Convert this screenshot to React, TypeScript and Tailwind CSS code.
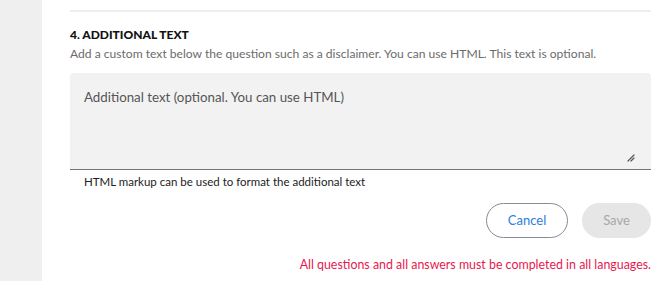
import React from 'react';

const App = () => {
  return (
    <div className="flex h-[281px] w-[670px] overflow-hidden bg-white font-['Lato',sans-serif]">
      {/* Sidebar */}
      <div className="w-[42px] shrink-0 bg-[#efefef]" />

      {/* Content */}
      <div className="flex-1 pl-[28px] pr-[19px] pt-[10px]">
        <div className="h-[2px] bg-[#eeeeee]" />

        <h3 className="mt-[16px] text-[12px] font-black leading-[14px] text-[#111]">4. ADDITIONAL TEXT</h3>
        <p className="mt-[5px] text-[12.1px] leading-[14px] text-[#6b6b6b]">
          Add a custom text below the question such as a disclaimer. You can use HTML. This text is optional.
        </p>

        <div className="relative mt-[12px]">
          <textarea
            placeholder="Additional text (optional. You can use HTML)"
            className="block h-[97px] w-full resize-none rounded-t-[4px] border-b border-[#73737f] bg-[#f2f2f2] px-[14px] pt-[16px] text-[13.3px] leading-[16px] text-[#333] placeholder:text-[#555] focus:outline-none"
          />
          <svg className="absolute bottom-[8px] right-[16px] h-[8px] w-[8px]" viewBox="0 0 8 8" fill="none">
            <path d="M1 7 L7 1 M4 7 L7 4" stroke="#555" strokeWidth="1.2" strokeLinecap="round" />
          </svg>
        </div>
        <p className="mt-[5px] pl-[14px] text-[11.5px] leading-[13px] text-[#222]">
          HTML markup can be used to format the additional text
        </p>

        <div className="mt-[15px] flex justify-end gap-[14px]">
          <button className="h-[35px] w-[82px] rounded-full border border-[#8a8a96] bg-white text-[13px] text-[#2a7de1]">
            Cancel
          </button>
          <button disabled className="h-[35px] w-[69px] rounded-full bg-[#e6e6e6] text-[13px] text-[#a8a8a8]">
            Save
          </button>
        </div>

        <p className="mt-[20px] text-right text-[12.4px] leading-[14px] text-[#e8184f]">
          All questions and all answers must be completed in all languages.
        </p>
      </div>
    </div>
  );
};

export default App;
